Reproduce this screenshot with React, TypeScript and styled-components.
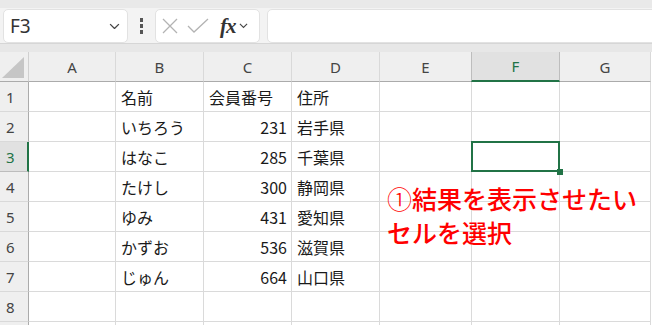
import styled, { createGlobalStyle } from 'styled-components';

const GlobalStyle = createGlobalStyle`
  html, body {
    margin: 0;
    padding: 0;
    background: #ffffff;
    overflow: hidden;
  }
`;

type Col = { key: string; w: number };

const cols: Col[] = [
  { key: 'A', w: 87 },
  { key: 'B', w: 88 },
  { key: 'C', w: 88 },
  { key: 'D', w: 88 },
  { key: 'E', w: 92 },
  { key: 'F', w: 88 },
  { key: 'G', w: 91 },
];

type RowData = { name?: string; no?: string; addr?: string };

const rows: RowData[] = [
  { name: '名前', no: '会員番号', addr: '住所' },
  { name: 'いちろう', no: '231', addr: '岩手県' },
  { name: 'はなこ', no: '285', addr: '千葉県' },
  { name: 'たけし', no: '300', addr: '静岡県' },
  { name: 'ゆみ', no: '431', addr: '愛知県' },
  { name: 'かずお', no: '536', addr: '滋賀県' },
  { name: 'じゅん', no: '664', addr: '山口県' },
  {},
  {},
];

const selCol = 'F';
const selRow = 3;
// only the top few pixels of row 9 show, so its number stays hidden
const lastLabelled = 8;

function Chevron({ size = 10 }: { size?: number }) {
  return (
    <svg width={size} height={size * 0.6} viewBox="0 0 10 6">
      <polyline points="1,1 5,5 9,1" fill="none" stroke="#444" strokeWidth="1.2" />
    </svg>
  );
}

function App() {
  return (
    <Screen>
      <GlobalStyle />
      <FormulaBar>
        <NameBox>
          <span>F3</span>
          <Chevron size={11} />
        </NameBox>
        <Dots>
          <i />
          <i />
          <i />
        </Dots>
        <FxBox>
          <svg width="16" height="16" viewBox="0 0 16 16">
            <path d="M1 1 L15 15 M15 1 L1 15" stroke="#b3b3b3" strokeWidth="1.3" />
          </svg>
          <svg width="22" height="16" viewBox="0 0 22 16">
            <polyline points="1,8 7,14 21,1" fill="none" stroke="#b3b3b3" strokeWidth="1.3" />
          </svg>
          <Fx>fx</Fx>
          <Chevron size={9} />
        </FxBox>
        <FormulaInput />
      </FormulaBar>
      <Band />
      <Sheet $cols={cols.map((c) => c.w)}>
        <Corner>
          <svg width="22" height="21" viewBox="0 0 22 21">
            <polygon points="22,0 22,21 0,21" fill="#c6c6c6" />
          </svg>
        </Corner>
        {cols.map((c) => (
          <ColHeader key={c.key} $active={c.key === selCol}>
            {c.key}
          </ColHeader>
        ))}
        {rows.map((r, i) => {
          const n = i + 1;
          const isNum = r.no !== undefined && /^\d+$/.test(r.no);
          return [
            <RowHeader key={`h${n}`} $active={n === selRow}>
              {n <= lastLabelled ? n : ''}
            </RowHeader>,
            ...cols.map((c) => {
              let text = '';
              if (c.key === 'B') text = r.name ?? '';
              if (c.key === 'C') text = r.no ?? '';
              if (c.key === 'D') text = r.addr ?? '';
              return (
                <Cell
                  key={`${c.key}${n}`}
                  $right={c.key === 'C' && isNum}
                  $selected={c.key === selCol && n === selRow}
                >
                  {text}
                </Cell>
              );
            }),
          ];
        })}
      </Sheet>
      <Note>
        <Circled>①</Circled>結果を表示させたい
        <br />
        セルを選択
      </Note>
    </Screen>
  );
}

const Screen = styled.div`
  position: relative;
  width: 652px;
  height: 325px;
  overflow: hidden;
  background: #ffffff;
  font-family: 'Noto Sans CJK JP', 'Noto Sans', sans-serif;
`;

const FormulaBar = styled.div`
  display: flex;
  align-items: center;
  height: 43px;
  box-sizing: border-box;
  padding: 9px 0 0 3px;
  background: linear-gradient(#e9e9e9 0 8px, #f3f3f3 8px);
`;

const Box = styled.div`
  height: 34px;
  box-sizing: border-box;
  background: #ffffff;
  border: 1px solid #e2e2e2;
  border-radius: 5px;
  display: flex;
  align-items: center;
`;

const NameBox = styled(Box)`
  width: 125px;
  padding: 0 7px 0 6px;
  justify-content: space-between;

  span {
    font-family: 'Noto Sans', 'Liberation Sans', sans-serif;
    font-size: 19px;
    color: #333;
  }
`;

const Dots = styled.div`
  width: 27px;
  display: flex;
  flex-direction: column;
  align-items: center;
  gap: 2px;

  i {
    display: block;
    width: 3px;
    height: 4px;
    background: #555;
  }
`;

const FxBox = styled(Box)`
  width: 105px;
  padding: 0 0 0 6px;
  gap: 9px;

  svg:last-child {
    margin-left: -6px;
  }
`;

const Fx = styled.span`
  font-family: 'Liberation Serif', serif;
  font-style: italic;
  font-weight: bold;
  font-size: 21px;
  color: #333;
  margin-left: 2px;
  letter-spacing: -1px;
`;

const FormulaInput = styled(Box)`
  flex: 1;
  margin-left: 7px;
  margin-right: -10px;
`;

const Band = styled.div`
  height: 9px;
  background: #e7e7e7;
  border-top: 1px solid #d6d6d6;
  box-sizing: border-box;
`;

const Sheet = styled.div<{ $cols: number[] }>`
  display: grid;
  grid-template-columns: 29px ${(p) => p.$cols.map((w) => `${w}px`).join(' ')};
  grid-auto-rows: 30px;
`;

const Corner = styled.div`
  background: #efefef;
  border-right: 1px solid #d0d0d0;
  border-bottom: 1px solid #ababab;
  display: flex;
  align-items: flex-end;
  justify-content: flex-end;
  padding: 0 4px 3px 0;
`;

const ColHeader = styled.div<{ $active?: boolean }>`
  display: flex;
  align-items: center;
  justify-content: center;
  font-family: 'Noto Sans', 'Liberation Sans', sans-serif;
  font-size: 15px;
  color: ${(p) => (p.$active ? '#217346' : '#444')};
  background: ${(p) => (p.$active ? '#e1e1e1' : '#efefef')};
  border-right: 1px solid ${(p) => (p.$active ? '#bdbdbd' : '#d9d9d9')};
  border-left: ${(p) => (p.$active ? '1px solid #bdbdbd' : 'none')};
  margin-left: ${(p) => (p.$active ? '-1px' : '0')};
  border-bottom: ${(p) => (p.$active ? '2px solid #217346' : '1px solid #ababab')};
`;

const RowHeader = styled.div<{ $active?: boolean }>`
  display: flex;
  align-items: center;
  padding-left: 6px;
  font-family: 'Noto Sans', 'Liberation Sans', sans-serif;
  font-size: 15px;
  color: ${(p) => (p.$active ? '#217346' : '#444')};
  background: ${(p) => (p.$active ? '#e1e1e1' : '#efefef')};
  border-right: ${(p) => (p.$active ? '2px solid #217346' : '1px solid #ababab')};
  border-bottom: 1px solid ${(p) => (p.$active ? '#bdbdbd' : '#d9d9d9')};
`;

const Cell = styled.div<{ $right?: boolean; $selected?: boolean }>`
  position: relative;
  display: flex;
  align-items: center;
  justify-content: ${(p) => (p.$right ? 'flex-end' : 'flex-start')};
  padding: 0 4px 0 5px;
  font-size: 16px;
  color: #1a1a1a;
  border-right: 1px solid #dadada;
  border-bottom: 1px solid #dadada;
  white-space: nowrap;

  ${(p) =>
    p.$selected &&
    `
    &::after {
      content: '';
      position: absolute;
      left: -1px;
      top: -1px;
      right: -1px;
      bottom: -1px;
      border: 2px solid #217346;
    }
    &::before {
      content: '';
      position: absolute;
      right: -4px;
      bottom: -4px;
      width: 6px;
      height: 6px;
      background: #217346;
      z-index: 1;
    }
  `}
`;

const Note = styled.div`
  position: absolute;
  left: 387px;
  top: 181px;
  font-family: 'Noto Sans CJK JP', sans-serif;
  font-weight: 500;
  font-size: 25px;
  line-height: 34px;
  color: #ff0000;
  white-space: nowrap;
`;

const Circled = styled.span`
  font-family: 'Noto Sans CJK JP', sans-serif;
  font-weight: 300;
`;

export default App;
